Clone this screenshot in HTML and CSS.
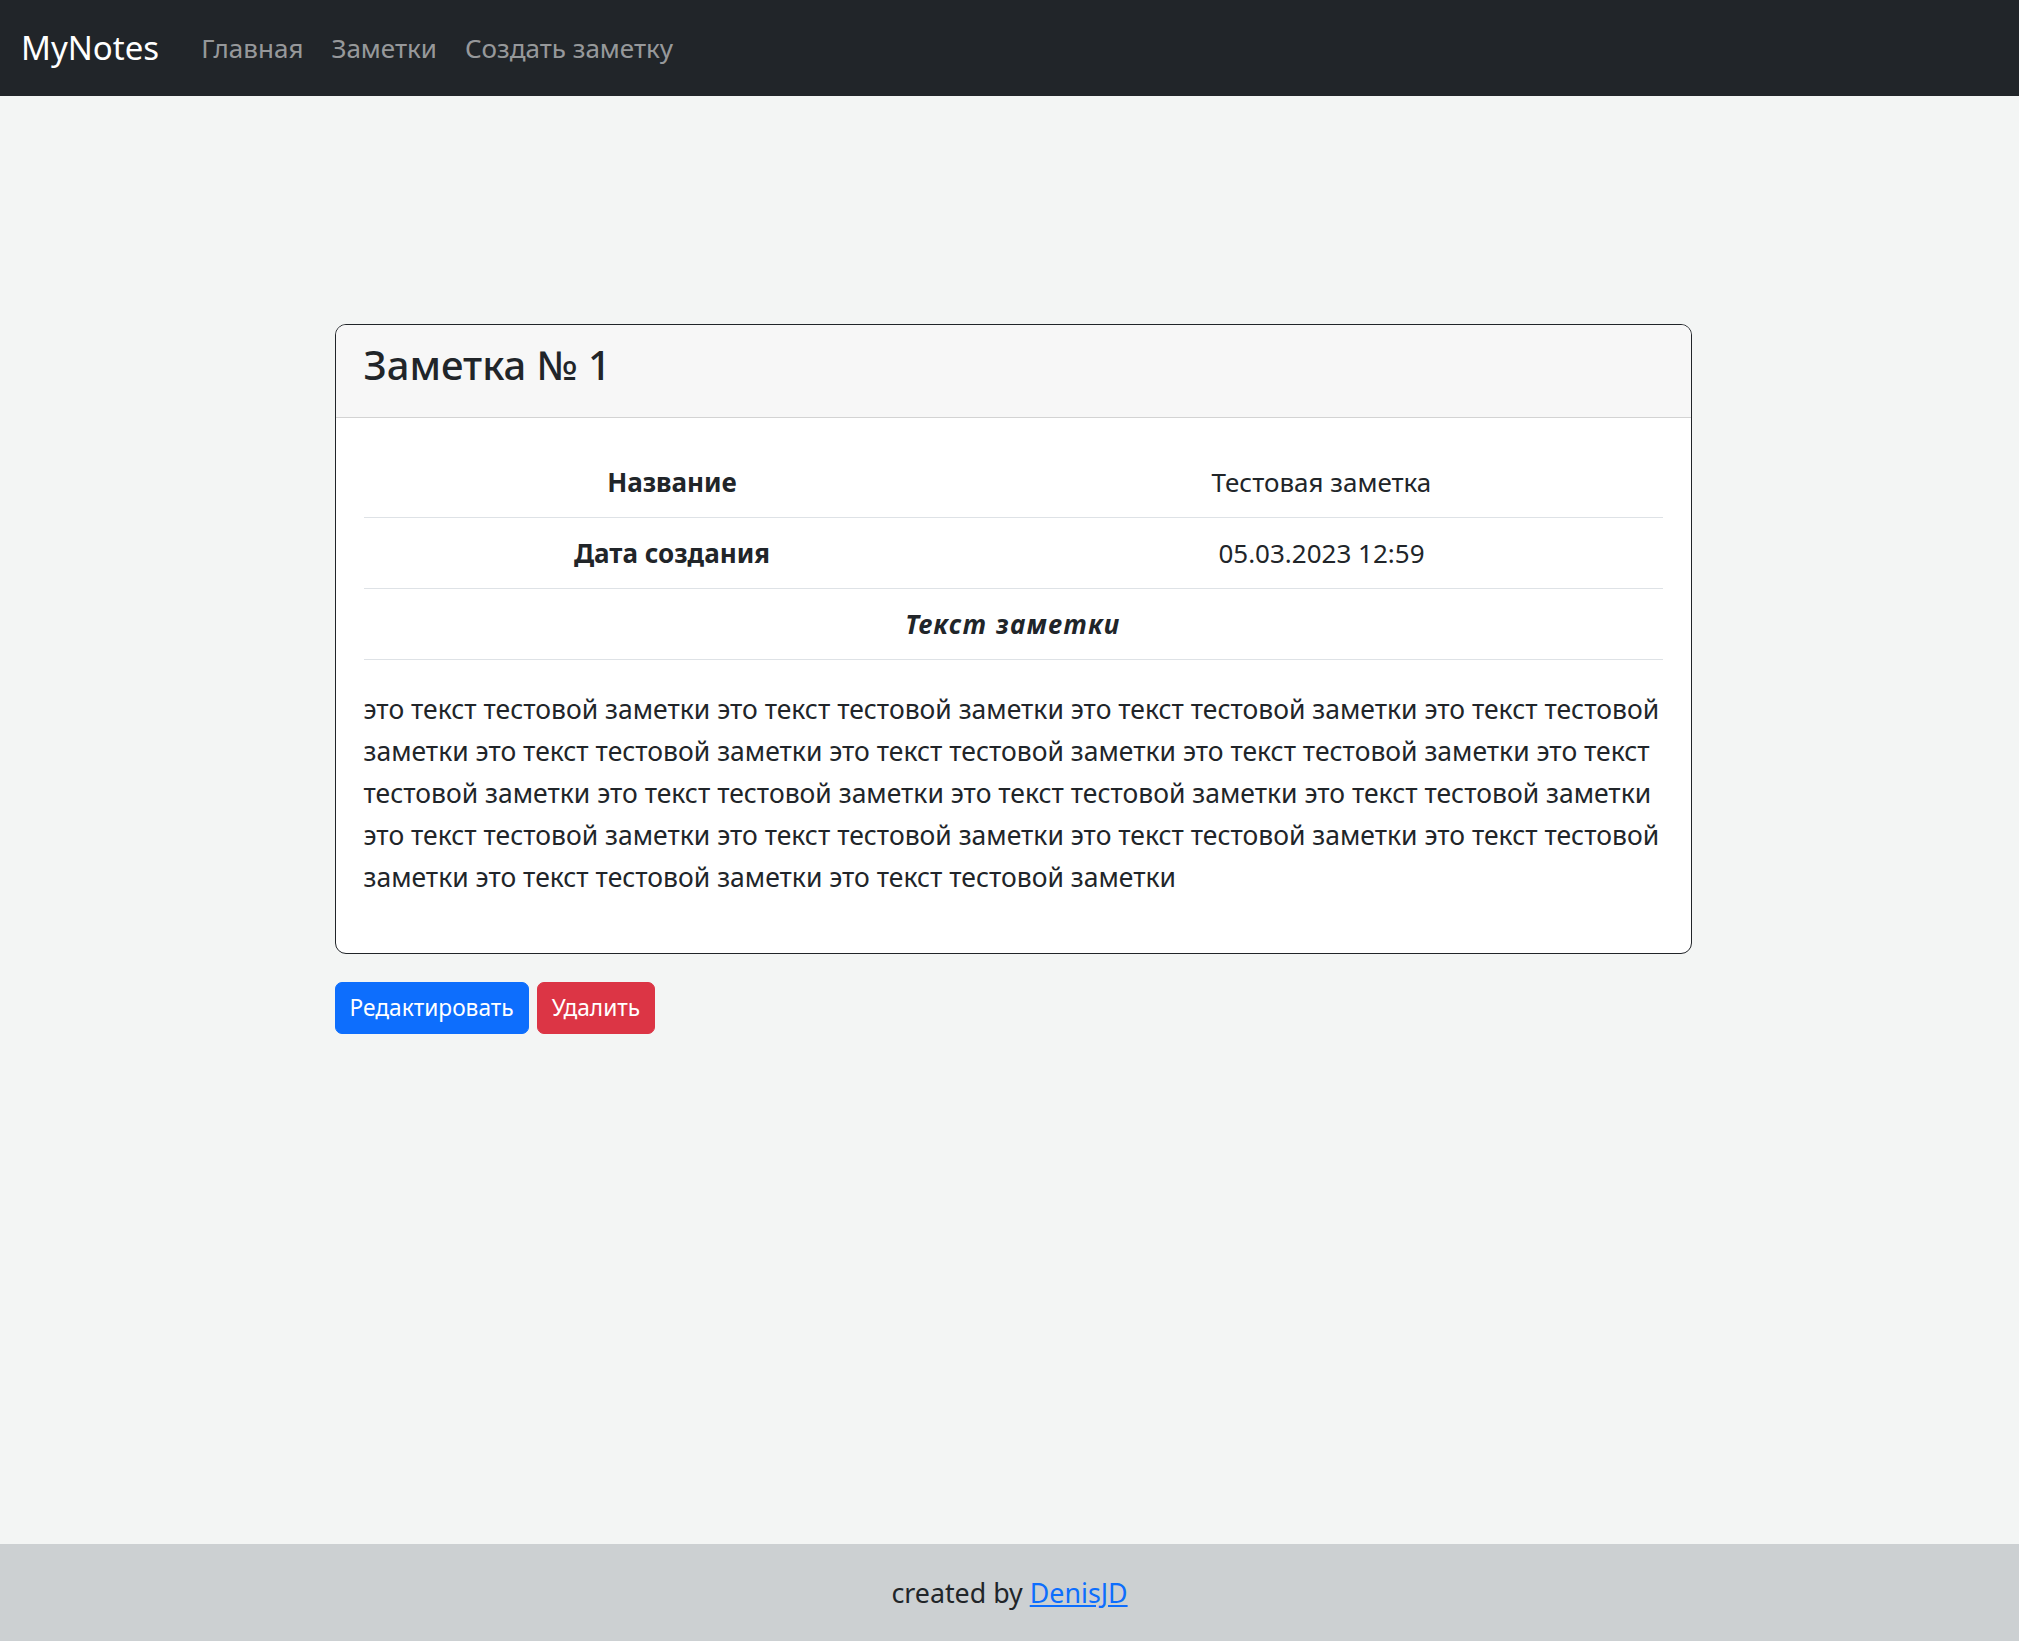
FILE: index.html
```html
<!DOCTYPE html>
<html lang="ru">
<head>
<meta charset="utf-8">
<title>MyNotes</title>
<link rel="stylesheet" href="styles.css">
</head>
<body>
<nav class="navbar">
  <a class="brand" href="#">MyNotes</a>
  <ul class="nav">
    <li><a class="nav-link" href="#">Главная</a></li>
    <li><a class="nav-link" href="#">Заметки</a></li>
    <li><a class="nav-link" href="#">Создать заметку</a></li>
  </ul>
</nav>
<main class="main">
  <div class="card">
    <div class="card-header">
      <h4 class="card-title">Заметка № 1</h4>
    </div>
    <div class="card-body">
      <table class="table">
        <tbody>
          <tr><th>Название</th><td>Тестовая заметка</td></tr>
          <tr><th>Дата создания</th><td>05.03.2023 12:59</td></tr>
          <tr><th colspan="2" class="italic">Текст заметки</th></tr>
        </tbody>
      </table>
      <p class="note-text">это текст тестовой заметки это текст тестовой заметки это текст тестовой заметки это текст тестовой заметки это текст тестовой заметки это текст тестовой заметки это текст тестовой заметки это текст тестовой заметки это текст тестовой заметки это текст тестовой заметки это текст тестовой заметки это текст тестовой заметки это текст тестовой заметки это текст тестовой заметки это текст тестовой заметки это текст тестовой заметки это текст тестовой заметки</p>
    </div>
  </div>
  <div class="actions">
    <a class="btn btn-primary" href="#">Редактировать</a>
    <a class="btn btn-danger" href="#">Удалить</a>
  </div>
</main>
<footer class="footer">
  <p class="footer-text">created by <a href="#" class="footer-link">DenisJD</a></p>
</footer>
</body>
</html>
```
FILE: styles.css
```css
* { box-sizing: border-box; }
html, body { margin: 0; padding: 0; }
body {
  min-height: 100vh;
  display: flex;
  flex-direction: column;
  background: #f3f5f4;
  color: #212529;
  font-family: "Noto Sans", "Open Sans", sans-serif;
  font-size: 26px;
  line-height: 42px;
}
a { color: inherit; text-decoration: none; }

.navbar {
  height: 96px;
  background: #212529;
  display: flex;
  align-items: center;
  padding: 0 21px;
}
.brand {
  color: #fff;
  font-size: 33px;
  line-height: 52px;
  margin-right: 28px;
}
.nav {
  list-style: none;
  margin: 0;
  padding: 0;
  display: flex;
}
.nav-link {
  display: block;
  padding: 7px 14px;
  color: rgba(255,255,255,0.55);
  font-size: 26px;
}

.main {
  width: 1357px;
  margin: 228px 0 0 calc(50% - 675px);
}
.card {
  background: #fff;
  border: 1.75px solid #212529;
  border-radius: 11px;
  overflow: hidden;
}
.card-header {
  background: #f7f7f7;
  border-bottom: 1.75px solid #d3d3d3;
  padding: 15px 28px 13px;
}
.card-title {
  margin: 0 0 14px;
  font-size: 40px;
  line-height: 50px;
  font-weight: 500;
}
.card-body { padding: 29px 28px 27px; }

.table {
  width: 100%;
  border-collapse: collapse;
  margin-bottom: 28px;
}
.table th, .table td {
  padding: 14px;
  text-align: center;
  border-bottom: 1.75px solid #dee2e6;
  line-height: 42px;
}
.table th { font-weight: 700; }
.italic { font-style: italic; letter-spacing: 1.5px; }
.note-text {
  margin: 0 0 28px;
  font-size: 26.5px;
}

.actions {
  margin-top: 28px;
  display: flex;
  gap: 8px;
}
.btn {
  display: inline-block;
  color: #fff;
  font-size: 22.7px;
  line-height: 36px;
  padding: 7px 14px;
  border-radius: 7px;
  border: 1.75px solid transparent;
}
.btn-primary { background: #0d6efd; border-color: #0d6efd; }
.btn-danger { background: #dc3545; border-color: #dc3545; }

.footer {
  margin-top: auto;
  background: #ccd0d2;
  height: 97px;
  display: flex;
  align-items: center;
  justify-content: center;
}
.footer-text {
  margin: 0;
  text-align: center;
  font-size: 26.8px;
}
.footer-link {
  color: #0d6efd;
  text-decoration: underline;
}
```
